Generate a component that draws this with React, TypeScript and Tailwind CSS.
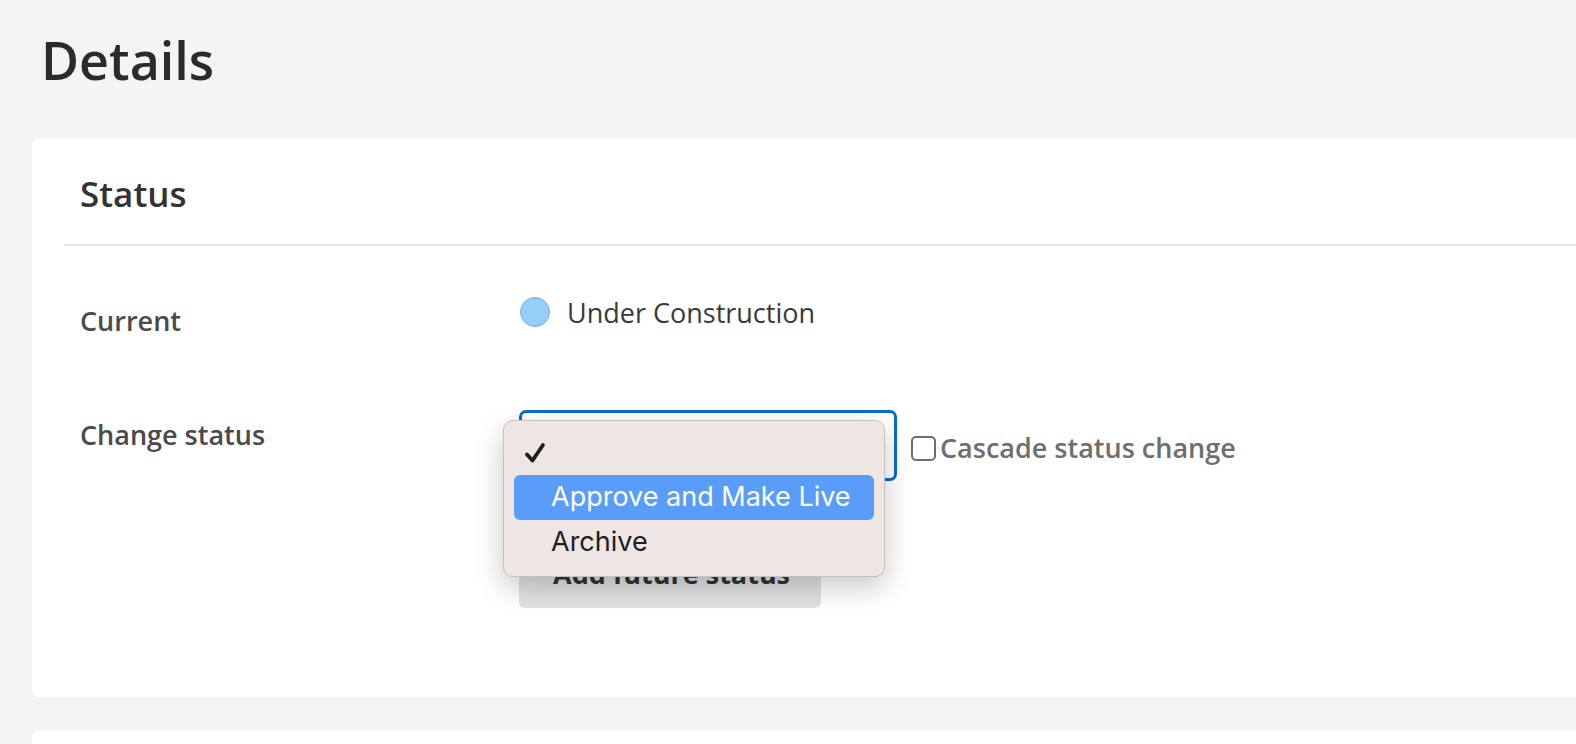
import { useState } from "react"

function CheckIcon() {
  return (
    <svg width="22" height="22" viewBox="0 0 22 22" fill="none">
      <path d="M3 12.5 L8.5 18.5 L19 3" stroke="#1f1f1f" strokeWidth="3.8" strokeLinecap="round" strokeLinejoin="round" />
    </svg>
  )
}

function StatusMenu() {
  const options = ["Approve and Make Live", "Archive"]
  return (
    <div className="absolute left-[-16px] top-[10px] w-[382px] rounded-[10px] border border-[#c7c2c0] bg-[#ede6e3] px-[10px] pt-[9px] pb-[11px] shadow-[0_10px_28px_rgba(0,0,0,0.22)] font-['Inter',sans-serif]">
      <div className="flex h-[45px] items-center pl-[10px]">
        <CheckIcon />
      </div>
      {options.map((opt, i) => (
        <div
          key={opt}
          className={
            i === 0
              ? "flex h-[45px] items-center rounded-[6px] bg-[#5a9df8] pl-[37px] text-[27px] text-white"
              : "flex h-[45px] items-center rounded-[6px] pl-[37px] text-[27px] text-[#1e1e1e]"
          }
        >
          {opt}
        </div>
      ))}
    </div>
  )
}

export default function App() {
  const [cascade, setCascade] = useState(false)

  return (
    <div className="h-[744px] w-[1576px] overflow-hidden bg-[#f4f4f4] font-['Open_Sans',sans-serif]">
      <div className="w-[1640px] pl-[32px] pt-[32px]">
        <h1 className="mb-[50px] pl-[9px] text-[52px] font-semibold leading-[56px] text-[#2b2b2b]">Details</h1>

        <section className="mb-[33px] rounded-[8px] bg-white px-[32px] pt-[38px] pb-[89px]">
          <div className="border-b-2 border-[#e6e6e6] px-[16px] pb-[32px]">
            <h2 className="text-[35px] font-semibold leading-[36px] text-[#333333]">Status</h2>
          </div>

          <div className="grid grid-cols-[439px_1fr] px-[16px] pt-[48px]">
            <div className="pt-[13px] text-[27px] font-semibold leading-none text-[#4a4a4a]">Current</div>
            <div className="mt-[3px] flex h-[30px] items-center gap-[17px] pl-[1px]">
              <span className="h-[30px] w-[30px] rounded-full border-[1.5px] border-[#78acd9] bg-[#95cef9]" />
              <span className="text-[27px] leading-none text-[#3a3a3a]">Under Construction</span>
            </div>

            <div className="mt-[76px] pt-[11px] text-[27px] font-semibold leading-none text-[#4a4a4a]">
              Change status
            </div>
            <div className="mt-[76px] flex flex-col items-start">
              <div className="flex items-center">
                <div className="relative">
                  <div className="h-[71px] w-[378px] rounded-[7px] border-[3px] border-[#0b6bcb] bg-white" />
                  <StatusMenu />
                </div>
                <label className="ml-[14px] mt-[6px] flex items-center">
                  <input
                    type="checkbox"
                    checked={cascade}
                    onChange={(e) => setCascade(e.target.checked)}
                    className="h-[25px] w-[25px] appearance-none rounded-[5px] border-2 border-[#6e6e6e] bg-white"
                  />
                  <span className="ml-[4px] -mt-[3px] text-[27px] font-semibold leading-none text-[#6e6e6e]">
                    Cascade status change
                  </span>
                </label>
              </div>
              <button className="mt-[60px] h-[67px] w-[302px] rounded-[6px] bg-[#e2e2e2] pl-[34px] text-left text-[27px] font-bold text-[#333333]">
                Add future status
              </button>
            </div>
          </div>
        </section>

        <section className="h-[200px] rounded-[8px] bg-white" />
      </div>
    </div>
  )
}
